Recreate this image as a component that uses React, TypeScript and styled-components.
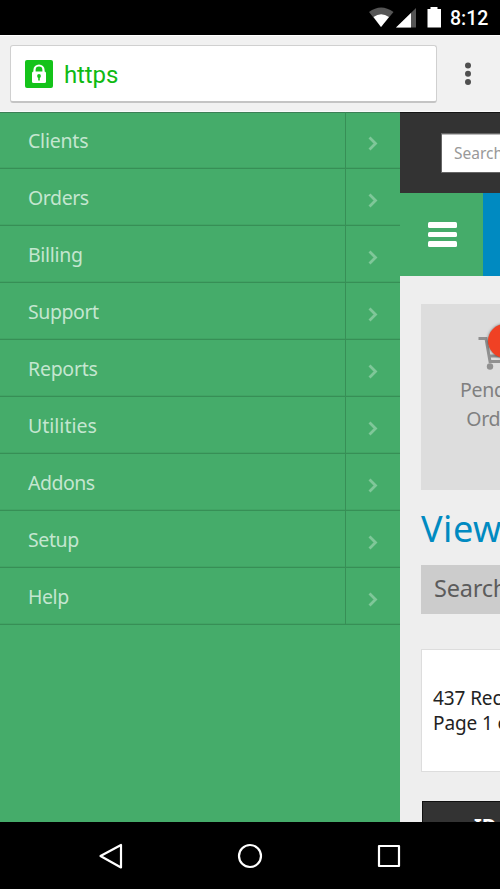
import React from 'react';
import styled, { createGlobalStyle } from 'styled-components';

const GlobalStyle = createGlobalStyle`
  * { box-sizing: border-box; }
  body { margin: 0; overflow: hidden; }
  svg { display: block; flex: none; }
`;

const Phone = styled.div`
  width: 500px;
  height: 889px;
  display: flex;
  flex-direction: column;
  overflow: hidden;
  background: #000;
  font-family: 'Noto Sans', 'Open Sans', sans-serif;
  white-space: nowrap;
`;

const StatusBar = styled.header`
  flex: none;
  height: 35px;
  display: flex;
  align-items: center;
  justify-content: flex-end;
  padding-right: 11px;
  background: #000;
`;

const Clock = styled.span`
  width: 39px;
  margin-left: 9px;
  padding-top: 2px;
  color: #fff;
  font: 500 19.5px/34px Roboto, sans-serif;
`;

const BrowserBar = styled.div`
  flex: none;
  height: 77px;
  display: flex;
  align-items: flex-start;
  padding: 9px 0 0 10px;
  background: #f1f1f1;
  border-top: 1px solid #fff;
  border-bottom: 1px solid #fafafa;
`;

const AddressField = styled.div`
  width: 427px;
  height: 58px;
  display: flex;
  align-items: center;
  gap: 11px;
  padding-left: 14px;
  background: #fff;
  border: 1px solid #d0d0d0;
  border-bottom: 2px solid #c4c4c4;
  border-radius: 3px;
`;

const Scheme = styled.span`
  color: #0fba13;
  font: 400 24px/28px Roboto, sans-serif;
  letter-spacing: -0.1px;
  padding-top: 2px;
`;

const MoreIcon = styled.svg`
  margin: 16px 0 0 26px;
`;

const Viewport = styled.main`
  flex: none;
  height: 710px;
  display: flex;
  overflow: hidden;
`;

const Drawer = styled.nav`
  flex: none;
  width: 400px;
  background: #45ac6a;
  border-top: 1px solid #3c7f56;
`;

const MenuRow = styled.div`
  height: 57px;
  display: flex;
  border-bottom: 1px solid #378f56;
  box-shadow: inset 0 -1px #41a464;
  &:first-child { height: 56px; }
  &:first-child > * { margin-top: -1px; height: 56px; }
`;

const MenuLabel = styled.span<{ $spacing: number }>`
  width: 345px;
  padding: 16px 0 0 28px;
  color: #c4e6d0;
  font-size: 19.5px;
  line-height: 26px;
  letter-spacing: ${(p) => p.$spacing}px;
`;

const Expand = styled.span`
  flex: 1;
  display: flex;
  justify-content: center;
  padding: 24px 1px 0 0;
  border-left: 1px solid #378f56;
`;

const Page = styled.section`
  flex: none;
  width: 600px;
  background: #eee;
`;

const SearchHeader = styled.div`
  height: 81px;
  padding: 21px 0 0 42px;
  background: #333;
  border-top: 1px solid #151515;
`;

const SearchInput = styled.div`
  width: 300px;
  height: 38px;
  padding-left: 12px;
  background: #fff;
  box-shadow: 0 0 0 1px #666, inset 0 1px #bbb;
  color: #999;
  font-size: 15.5px;
  line-height: 38px;
`;

const NavStrip = styled.div`
  height: 83px;
  display: flex;
  background: #008ac1;
`;

const MenuButton = styled.div`
  width: 83px;
  display: flex;
  flex-direction: column;
  align-items: center;
  gap: 4px;
  padding: 29px 0 0 1px;
  background: #45ac6a;
`;

const MenuBar = styled.span`
  width: 29px;
  height: 5.5px;
  border-radius: 1.5px;
  background: #fff;
`;

const Content = styled.div`
  padding: 28px 0 0 21px;
`;

const OrderCard = styled.div`
  position: relative;
  width: 152px;
  height: 186px;
  padding-top: 30px;
  background: #ddd;
  color: #808080;
  font-size: 19.5px;
  line-height: 29px;
  letter-spacing: -0.3px;
  text-align: center;
`;

const CartIcon = styled.svg`
  margin: 0 0 5px 57px;
`;

const Badge = styled.span`
  position: absolute;
  top: 20px;
  left: 67px;
  width: 34px;
  height: 34px;
  border-radius: 50%;
  background: #f04124;
  box-shadow: 0 0 3px rgba(0, 0, 0, 0.5);
`;

const Title = styled.h1`
  margin: 14px 0 0;
  height: 61px;
  color: #008ac1;
  font-size: 36px;
  font-weight: 400;
  line-height: 50px;
  letter-spacing: 0.5px;
`;

const FilterBar = styled.div`
  width: 460px;
  height: 49px;
  padding-left: 13px;
  background: #ccc;
  color: #5c5c5c;
  font-size: 23.5px;
  line-height: 46px;
  letter-spacing: -0.2px;
`;

const Summary = styled.div`
  width: 460px;
  height: 123px;
  margin-top: 35px;
  padding: 36px 0 0 11px;
  background: #fff;
  border: 1px solid #ddd;
  color: #222;
  font-size: 19px;
  line-height: 25px;
  letter-spacing: -0.1px;
`;

const TableHead = styled.div`
  width: 459px;
  height: 60px;
  margin: 29px 0 0 1px;
  padding: 9px 0 0 51px;
  background: #333;
  border: 1px solid #111;
  color: #fff;
  font-size: 20px;
  font-weight: 700;
  line-height: 29px;
`;

const SystemNav = styled.footer`
  flex: none;
  height: 67px;
  display: flex;
  justify-content: space-between;
  align-items: center;
  padding: 0 97px;
  background: #000;
`;

const menu = [
  { label: 'Clients', spacing: -0.22 },
  { label: 'Orders', spacing: -0.42 },
  { label: 'Billing', spacing: -0.32 },
  { label: 'Support', spacing: -0.42 },
  { label: 'Reports', spacing: -0.25 },
  { label: 'Utilities', spacing: 0 },
  { label: 'Addons', spacing: -0.5 },
  { label: 'Setup', spacing: -0.4 },
  { label: 'Help', spacing: -0.45 },
];

const StatusIcons = () => (
  <svg width="73" height="35" viewBox="368 0 73 35">
    <path d="M369 12Q381 3 393.500 12L381 27Z" fill="#555" />
    <path d="M373.500 17Q381 11.500 389 17L381 27Z" fill="#fff" />
    <path d="M396 27.500L416 8V27.500Z" fill="#555" />
    <path d="M396 27.500L411 13V27.500Z" fill="#fff" />
    <path d="M427.500 9h3V7h7v2h3.500v18.500h-13.500Z" fill="#fff" />
  </svg>
);

const LockIcon = () => (
  <svg width="28" height="28" viewBox="0 0 28 28">
    <rect width="28" height="28" rx="2" fill="#14c31a" />
    <path d="M9.500 13V10a4.500 4.500 0 0 1 9 0v3" fill="none" stroke="#fff" strokeWidth="2.200" />
    <rect x="7" y="11.500" width="14" height="11.500" rx="1.500" fill="#fff" />
    <circle cx="14" cy="16" r="1.900" fill="#14c31a" />
    <path d="M13.200 16h1.600v4.500h-1.600Z" fill="#14c31a" />
  </svg>
);

export default function App() {
  return (
    <Phone>
      <GlobalStyle />
      <StatusBar>
        <StatusIcons />
        <Clock>8:12</Clock>
      </StatusBar>
      <BrowserBar>
        <AddressField>
          <LockIcon />
          <Scheme>https</Scheme>
        </AddressField>
        <MoreIcon width="10" height="28" fill="#505050">
          <circle cx="5" cy="4.500" r="3" />
          <circle cx="5" cy="12.800" r="3" />
          <circle cx="5" cy="21" r="3" />
        </MoreIcon>
      </BrowserBar>
      <Viewport>
        <Drawer>
          {menu.map(({ label, spacing }) => (
            <MenuRow key={label}>
              <MenuLabel $spacing={spacing}>{label}</MenuLabel>
              <Expand>
                <svg width="10" height="15" viewBox="0 0 10 15">
                  <path d="M1.500 1.500L7.500 7.500L1.500 13.500" fill="none" stroke="#7fc799" strokeWidth="2.800" />
                </svg>
              </Expand>
            </MenuRow>
          ))}
        </Drawer>
        <Page>
          <SearchHeader>
            <SearchInput>Search</SearchInput>
          </SearchHeader>
          <NavStrip>
            <MenuButton>
              <MenuBar />
              <MenuBar />
              <MenuBar />
            </MenuButton>
          </NavStrip>
          <Content>
            <OrderCard>
              <CartIcon width="38" height="36" viewBox="0 0 38 36" fill="none" stroke="#909090" strokeWidth="3">
                <path d="M0.500 4.500H8L12 27.500H33M11 22H32L36 9H10" />
                <circle cx="12" cy="32.500" r="3.200" fill="#909090" stroke="none" />
                <circle cx="31" cy="32.500" r="3.200" fill="#909090" stroke="none" />
              </CartIcon>
              Pending
              <br />
              Orders
              <Badge />
            </OrderCard>
            <Title>View</Title>
            <FilterBar>Search/Filter</FilterBar>
            <Summary>
              437 Records
              <br />
              Page 1 of 9
            </Summary>
            <TableHead>ID</TableHead>
          </Content>
        </Page>
      </Viewport>
      <SystemNav>
        <svg width="28" height="28" fill="none" stroke="#fff" strokeWidth="2.200" strokeLinejoin="round">
          <path d="M24 3V25.500L3.500 14Z" />
        </svg>
        <svg width="28" height="28" fill="none" stroke="#fff" strokeWidth="2.200">
          <circle cx="14" cy="14" r="11" />
        </svg>
        <svg width="28" height="28" fill="none" stroke="#fff" strokeWidth="2.200" strokeLinejoin="round">
          <rect x="4" y="4" width="20" height="20" />
        </svg>
      </SystemNav>
    </Phone>
  );
}
